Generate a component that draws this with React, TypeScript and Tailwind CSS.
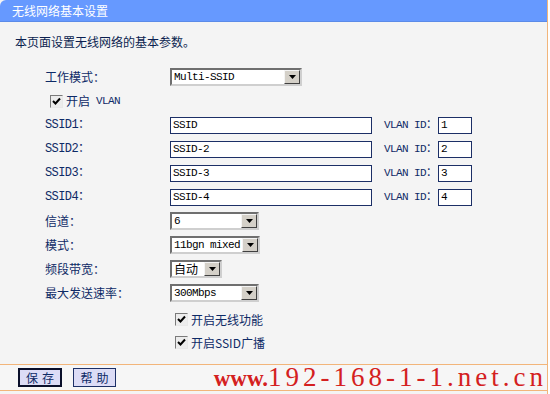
import React from "react";

const CN = "font-['Noto_Sans_CJK_SC',sans-serif]";
const MONO = "font-['Liberation_Mono','Noto_Sans_CJK_SC',monospace]";

function Arrow() {
  return (
    <div className="flex h-full w-[16px] shrink-0 items-center justify-center border border-t-[#f4f4f4] border-l-[#f4f4f4] border-r-[#404040] border-b-[#404040] bg-[#d4d0c8]">
      <svg width="7" height="4" viewBox="0 0 7 4">
        <polygon points="0,0 7,0 3.5,4" fill="#000" />
      </svg>
    </div>
  );
}

function Select({ value, className, cn }: { value: string; className: string; cn?: boolean }) {
  return (
    <div
      className={`flex h-[18px] items-stretch border-2 border-t-[#6f6f6f] border-l-[#6f6f6f] border-r-[#cfcfcf] border-b-[#cfcfcf] bg-white ${className}`}
    >
      <div
        className={`flex flex-1 items-center whitespace-nowrap pl-[2px] leading-none text-black ${
          cn ? CN + " text-[12px]" : MONO + " overflow-hidden text-[11px] tracking-[-0.6px]"
        }`}
      >
        {value}
      </div>
      <Arrow />
    </div>
  );
}

function TextInput({ value, className }: { value: string; className: string }) {
  return (
    <div
      className={`flex h-[17px] items-center whitespace-nowrap border border-[#1c2f66] bg-white pl-[2px] text-[11px] leading-none tracking-[-0.6px] text-black ${MONO} ${className}`}
    >
      {value}
    </div>
  );
}

function Check() {
  return (
    <div className="flex h-[13px] w-[13px] items-center justify-center border border-t-[#7a7a7a] border-l-[#7a7a7a] border-r-[#e8e8e8] border-b-[#e8e8e8] bg-[#ececec]">
      <svg width="9" height="9" viewBox="0 0 9 9">
        <polyline points="1,4 3.5,6.5 8,1.5" fill="none" stroke="#000" strokeWidth="2" />
      </svg>
    </div>
  );
}

function Row({ label, children, mono }: { label: string; children: React.ReactNode; mono?: boolean }) {
  return (
    <div className="flex h-6 items-center">
      <div
        className={`w-[170px] whitespace-nowrap pl-[45px] text-[12px] text-[#0e2a66] ${
          mono ? MONO + " tracking-[-0.6px]" : CN
        }`}
      >
        {label}
      </div>
      {children}
    </div>
  );
}

export default function App() {
  const ssids = [
    ["SSID1：", "SSID", "1"],
    ["SSID2：", "SSID-2", "2"],
    ["SSID3：", "SSID-3", "3"],
    ["SSID4：", "SSID-4", "4"],
  ];
  return (
    <div className="h-[394px] w-[550px] overflow-hidden bg-white">
      <div className="flex h-[394px] w-[548px] flex-col border-r border-[#f2b57a] bg-[#f4f4f4]">
        <div
          className={`flex h-[22px] items-center rounded-tl-[6px] border-b border-[#5b8be8] bg-[#6699ff] pl-[12px] text-[12px] text-white ${CN}`}
        >
          无线网络基本设置
        </div>
        <div className={`mt-[8px] flex h-6 items-center pl-[15px] text-[12px] text-[#0b1f50] ${CN}`}>
          本页面设置无线网络的基本参数。
        </div>
        <div className="mt-[11px] flex flex-col">
          <Row label="工作模式：">
            <Select value="Multi-SSID" className="w-[132px]" />
          </Row>
          <div className="flex h-6 items-center pl-[50px]">
            <Check />
            <span className={`ml-[3px] text-[12px] text-[#0e2a66] ${CN}`}>开启</span>
            <span className={`ml-[6px] text-[11px] tracking-[-0.6px] text-[#0e2a66] ${MONO}`}>VLAN</span>
          </div>
          {ssids.map(([l, v, id]) => (
            <Row key={l} label={l} mono>
              <TextInput value={v} className="w-[202px]" />
              <span
                className={`ml-[12px] w-[54px] whitespace-nowrap text-[11px] tracking-[-0.6px] text-[#0e2a66] ${MONO}`}
              >
                VLAN ID：
              </span>
              <TextInput value={id} className="w-[34px]" />
            </Row>
          ))}
          <Row label="信道：">
            <Select value="6" className="w-[89px]" />
          </Row>
          <Row label="模式：">
            <Select value="11bgn mixed" className="w-[90px]" />
          </Row>
          <Row label="频段带宽：">
            <Select value="自动" cn className="w-[52px]" />
          </Row>
          <Row label="最大发送速率：">
            <Select value="300Mbps" className="w-[89px]" />
          </Row>
          <div className="mt-[3px] flex h-[23px] items-center pl-[175px]">
            <Check />
            <span className={`ml-[3px] text-[12px] text-[#0e2a66] ${CN}`}>开启无线功能</span>
          </div>
          <div className="flex h-[23px] items-center pl-[175px]">
            <Check />
            <span className={`ml-[3px] text-[12px] text-[#0e2a66] ${CN}`}>开启SSID广播</span>
          </div>
        </div>
        <div className="mt-[10px] flex h-[27px] items-center justify-between border-y border-[#f2b57a] bg-[#f6f6f6]">
          <div className="flex items-center pl-[18px]">
            <div
              className={`flex h-[19px] w-[44px] items-center justify-center border-2 border-[#0a0f2a] bg-[#dcdcf6] pl-[4px] text-[12px] tracking-[4px] text-[#0e2a66] ${CN}`}
            >
              保存
            </div>
            <div
              className={`ml-[11px] flex h-[19px] w-[43px] items-center justify-center border border-[#1c2f66] bg-[#dcdcf6] pl-[4px] text-[12px] tracking-[4px] text-[#0e2a66] ${CN}`}
            >
              帮助
            </div>
          </div>
          <div className="flex items-baseline whitespace-nowrap font-['Liberation_Serif',serif] leading-none text-[#d42020]">
            <span className="text-[23px] font-bold">www.</span>
            <span className="text-[27px] tracking-[4px]">192-168-1-1.net.cn</span>
          </div>
        </div>
      </div>
    </div>
  );
}
